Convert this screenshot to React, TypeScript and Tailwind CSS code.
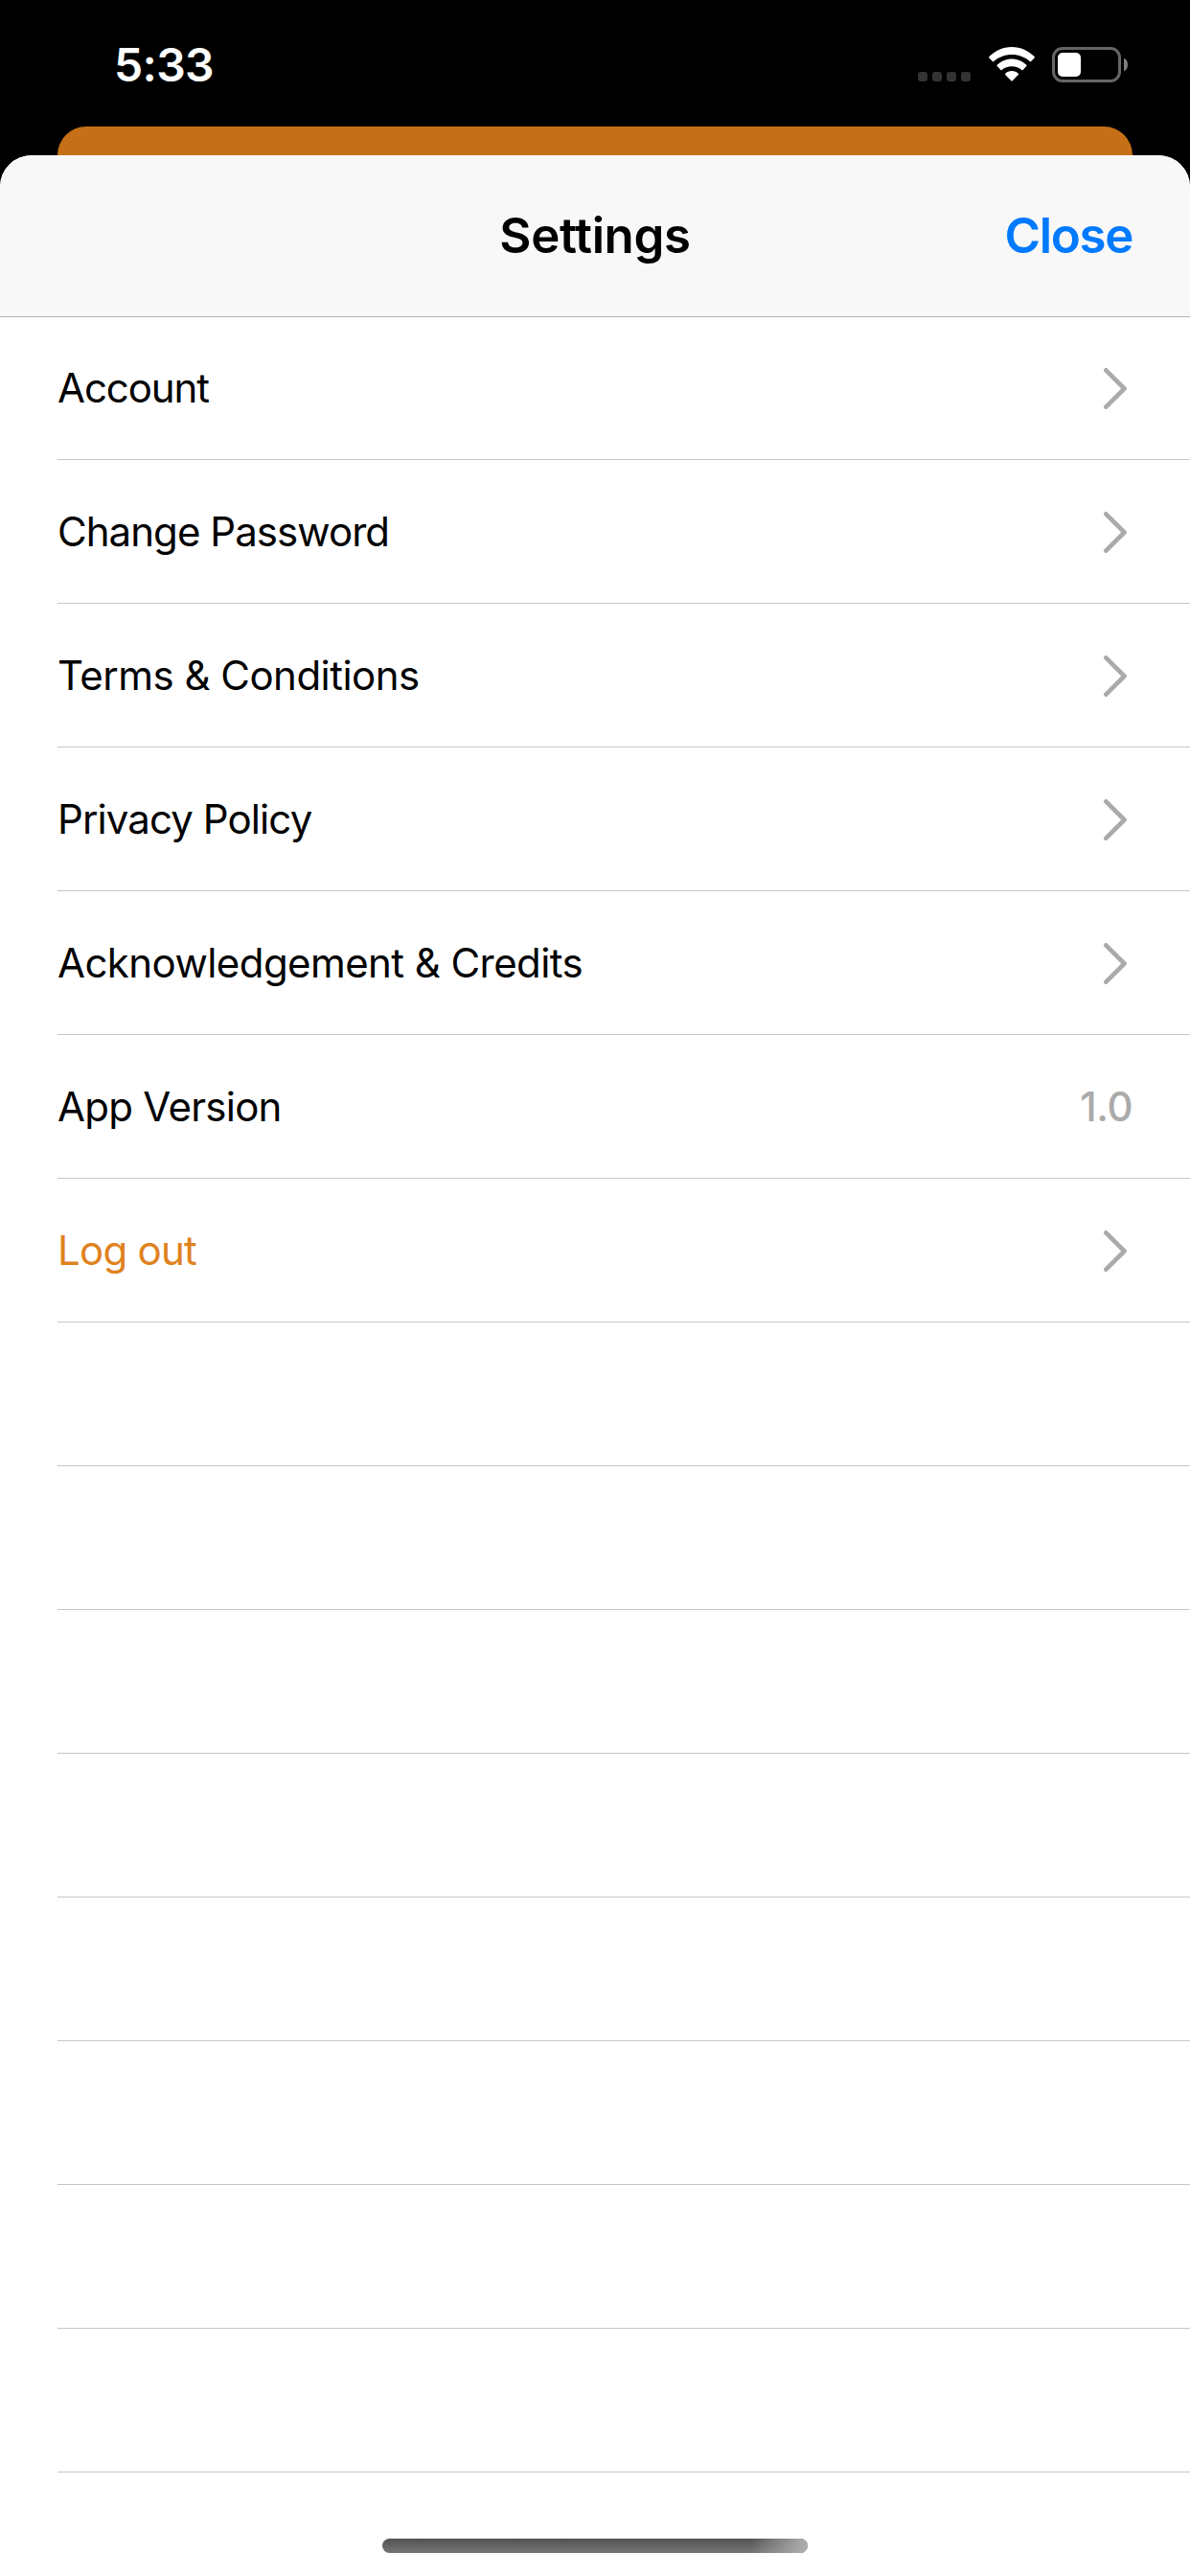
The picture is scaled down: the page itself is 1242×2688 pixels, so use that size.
type Item = { label: string; tracking: string; value?: string; accent?: boolean };

const items: Item[] = [
  { label: "Account", tracking: "tracking-[-1.1px]" },
  { label: "Change Password", tracking: "tracking-[-0.95px]" },
  { label: "Terms & Conditions", tracking: "tracking-[-0.52px]" },
  { label: "Privacy Policy", tracking: "tracking-[-0.9px]" },
  { label: "Acknowledgement & Credits", tracking: "tracking-[-0.57px]" },
  { label: "App Version", tracking: "tracking-[-0.73px]", value: "1.0" },
  { label: "Log out", tracking: "tracking-[-0.75px]", accent: true },
];

const EMPTY_ROWS = 8;

function WifiIcon() {
  return (
    <svg width="48" height="36" viewBox="0 0 48 36" fill="#fff">
      <path d="M.4 10.100C6.500 3.900 14.800 0 24 0s17.500 3.900 23.600 10.100c.4.400.4.900 0 1.300l-3.500 3.600c-.4.400-.9.400-1.300 0C38 10.700 31.300 8 24 8S10 10.700 5.200 15c-.4.400-.9.400-1.300 0L.4 11.400c-.4-.4-.4-.9 0-1.300Z" />
      <path d="M8.700 18.800C12.700 14.800 18 12.400 24 12.400s11.300 2.400 15.300 6.400c.4.400.4.900 0 1.300l-3.700 3.800c-.4.400-.9.400-1.300 0C31.500 21.700 28 20.300 24 20.300s-7.500 1.400-10.300 3.600c-.4.400-.9.400-1.300 0l-3.700-3.800c-.4-.4-.4-.9 0-1.300Z" />
      <path d="M17.200 27.700c1.800-1.700 4.200-2.700 6.800-2.700s5 1 6.800 2.700c.4.400.4.900 0 1.300l-6.100 6.300c-.4.400-1 .4-1.400 0L17.200 29c-.4-.4-.4-.9 0-1.300Z" />
    </svg>
  );
}

function Battery() {
  return (
    <div className="flex items-center gap-[3px]">
      <div className="h-[37px] w-[72px] rounded-[11px] border-[3px] border-[#666] p-[3px]">
        <div className="h-[25px] w-6 rounded-[5px] bg-white" />
      </div>
      <div className="h-[13px] w-1 bg-[#808080] [border-radius:0_100%_100%_0/0_50%_50%_0]" />
    </div>
  );
}

function StatusBar() {
  return (
    <div className="flex h-[132px] items-start justify-between pl-[119px] pr-[65px]">
      <span className="mt-[38px] text-[48px] leading-[60px] font-semibold tracking-[-0.67px] text-white">5:33</span>
      <div className="mt-[49px] flex">
        <div className="mt-[26px] mr-[19px] flex gap-[5px]">
          {[0, 1, 2, 3].map((i) => (
            <div key={i} className="size-[10px] rounded-[3px] bg-[#333]" />
          ))}
        </div>
        <div className="mr-[18px]">
          <WifiIcon />
        </div>
        <Battery />
      </div>
    </div>
  );
}

function Chevron() {
  return (
    <svg width="24" height="43" viewBox="0 0 24 43" fill="none" className="mt-[2px] mr-[6px]">
      <path d="M2.300 2.300 21.500 21.500 2.300 40.700" stroke="#aaa" strokeWidth="4.600" strokeLinecap="round" strokeLinejoin="round" />
    </svg>
  );
}

function Row({ item }: { item: Item }) {
  return (
    <li className="flex h-[150px] items-center justify-between border-b border-[#c6c6c8] pr-[60px] first:h-[149px] first:pb-px">
      <span className={`text-[42px] ${item.tracking} ${item.accent ? "text-[#df821f]" : "text-black"}`}>{item.label}</span>
      {item.value ? (
        <span className="text-[42px] font-medium tracking-[-0.5px] text-[#aaa]">{item.value}</span>
      ) : (
        <Chevron />
      )}
    </li>
  );
}

export default function App() {
  return (
    <div className="flex h-[2688px] w-[1242px] flex-col overflow-hidden bg-black font-['Inter',sans-serif]">
      <StatusBar />
      <div className="mx-[60px] h-[30px] shrink-0 rounded-t-[30px] bg-[#c57018]" />
      <div className="flex flex-1 flex-col overflow-hidden rounded-t-[33px] bg-white">
        <header className="grid h-[169px] shrink-0 grid-cols-3 items-center border-b border-[#b2b2b4] bg-[#f8f8f8] px-[60px] pt-px text-[51px] font-semibold">
          <h1 className="col-start-2 text-center tracking-[-0.36px]">Settings</h1>
          <button className="justify-self-end tracking-[-1.35px] text-[#007aff]">Close</button>
        </header>
        <ul className="pl-[60px]">
          {items.map((item) => (
            <Row key={item.label} item={item} />
          ))}
          {Array.from({ length: EMPTY_ROWS }, (_, i) => (
            <li key={i} className="h-[150px] border-b border-[#c6c6c8]" />
          ))}
        </ul>
        <div className="mt-auto mb-6 h-[15px] w-[444px] self-center overflow-hidden rounded-full bg-linear-to-b from-[#525252] to-[#757575]">
          <div className="ml-auto h-full w-[60px] bg-linear-to-r from-transparent to-[#b0b0b0]" />
        </div>
      </div>
    </div>
  );
}
